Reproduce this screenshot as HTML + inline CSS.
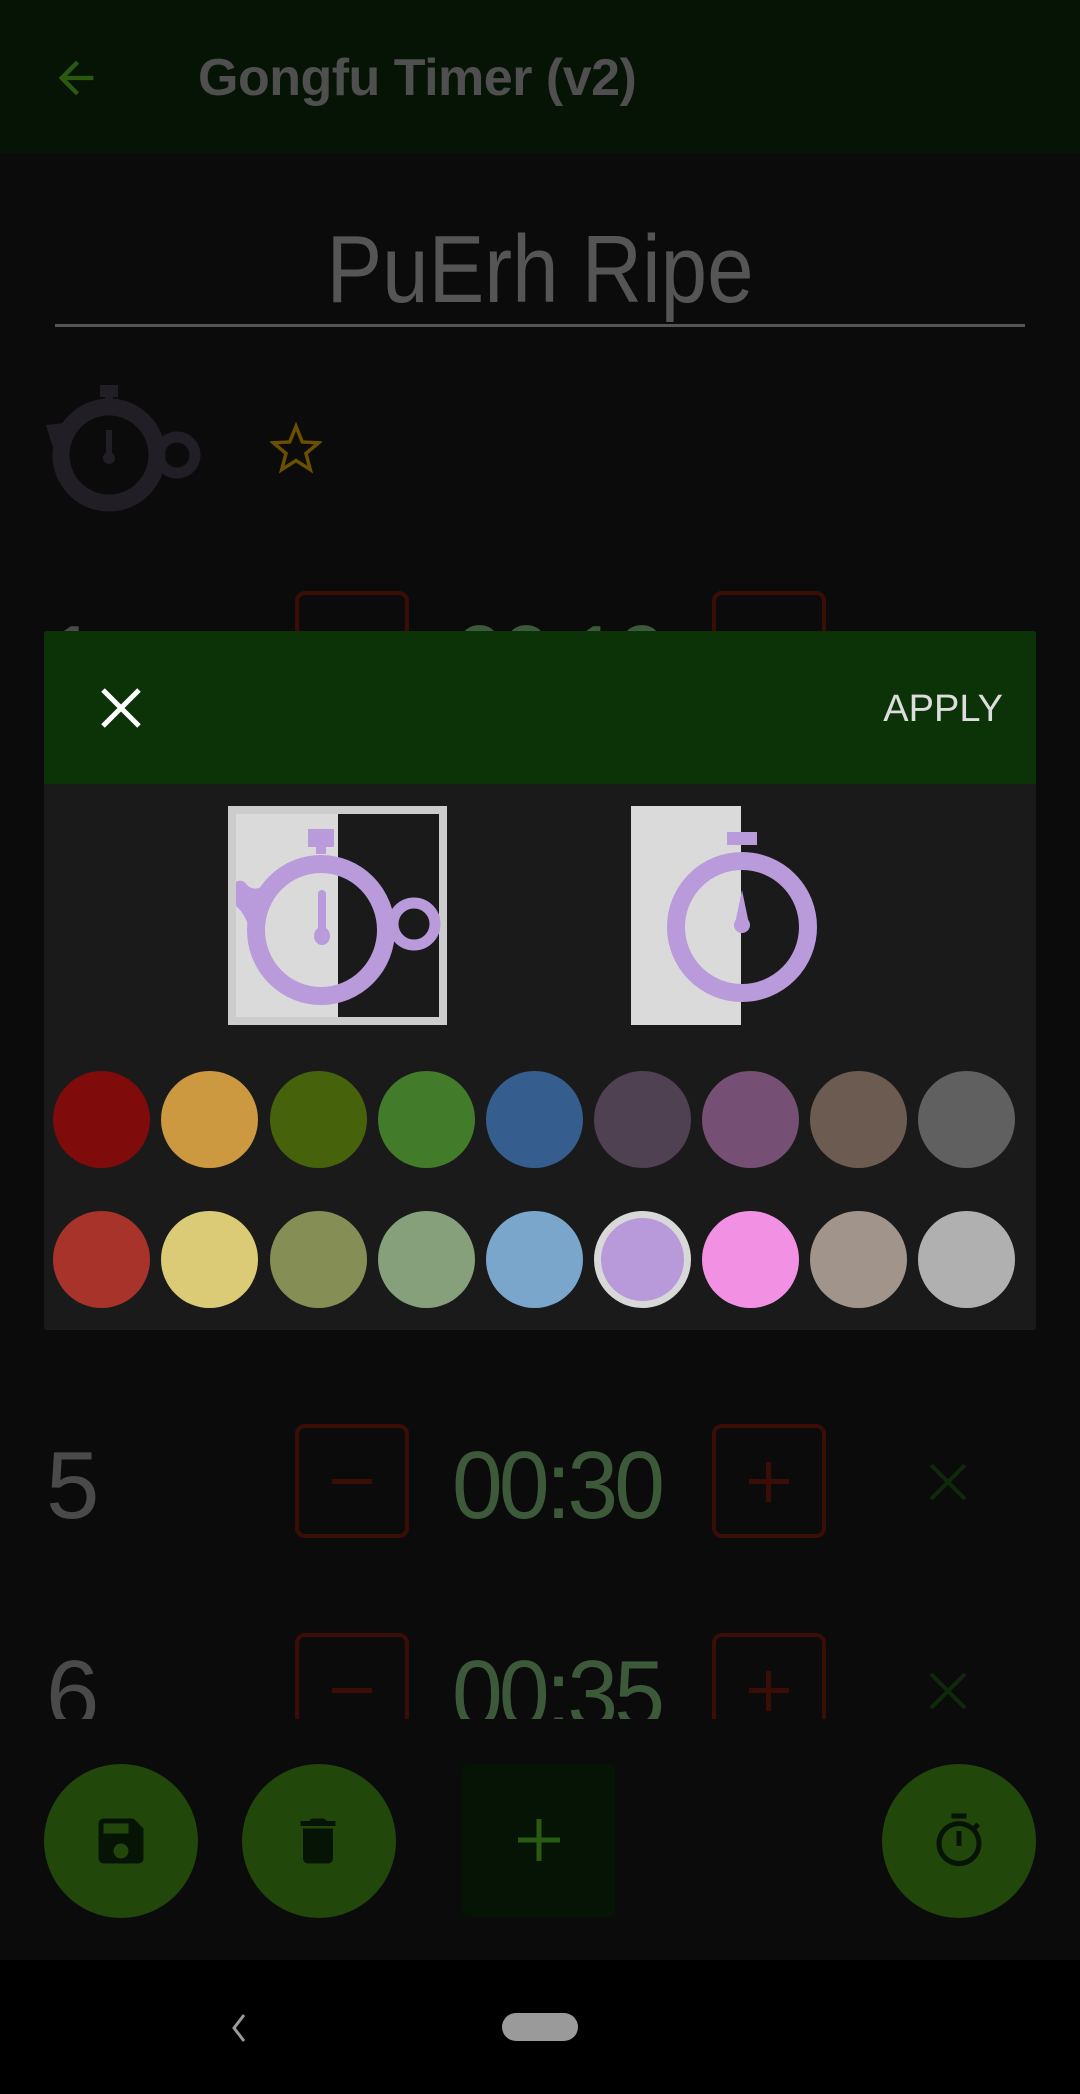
<!DOCTYPE html>
<html><head><meta charset="utf-8"><style>
*{margin:0;padding:0;box-sizing:border-box}
body{width:1080px;height:2094px;background:#0b0b0b;position:relative;overflow:hidden;font-family:"Liberation Sans",sans-serif}
.abs{position:absolute}
.circ{position:absolute;width:97px;height:97px;border-radius:50%}
.box{position:absolute;width:114px;height:114px;border:4px solid #3a0e06;border-radius:10px}
.num{position:absolute;color:#4a4a4a;font-size:96px;line-height:1}
.time{position:absolute;color:#3c5a3a;font-size:96px;line-height:1;letter-spacing:-4px;transform:scaleX(0.95);transform-origin:left}
.fab{position:absolute;width:154px;height:154px;border-radius:50%;background:#22470a;top:1764px}
</style></head><body>
<div class="abs" style="left:0;top:0;width:1080px;height:153px;background:#061405"></div>
<svg class="abs" style="left:50px;top:52px" width="52" height="52" viewBox="0 0 24 24"><path d="M20 11H7.8l5.6-5.6L12 4l-8 8 8 8 1.4-1.4L7.8 13H20z" fill="#2a5a10"/></svg>
<div class="abs" style="left:198px;top:52px;font-size:52px;font-weight:bold;color:#4f4f4f;line-height:1;letter-spacing:-0.5px">Gongfu Timer (v2)</div>

<div class="abs" style="left:0;width:1080px;top:222px;text-align:center;font-size:96px;color:#555;line-height:1;transform:scaleX(0.87)">PuErh Ripe</div>
<div class="abs" style="left:55px;top:324px;width:970px;height:3px;background:#555"></div>

<svg class="abs" style="left:44px;top:385px" width="160" height="128" viewBox="0 0 160 128">
<rect x="56" y="0" width="18" height="12" fill="#221e26"/><rect x="61" y="10" width="8" height="10" fill="#221e26"/>
<circle cx="65" cy="70" r="48" fill="none" stroke="#221e26" stroke-width="17"/>
<circle cx="133" cy="70" r="18" fill="none" stroke="#221e26" stroke-width="11"/>
<path d="M2 40 L20 38 L22 64 L8 60Z" fill="#221e26"/>
<rect x="62" y="45" width="6" height="28" fill="#221e26"/><circle cx="65" cy="73" r="6" fill="#221e26"/>
</svg>
<svg class="abs" style="left:270px;top:422px" width="52" height="52" viewBox="0 0 24 24"><path d="M12 2l2.9 7.2 7.6.4-5.9 4.9 2 7.5L12 17.8 5.4 22l2-7.5L1.5 9.6l7.6-.4z" fill="none" stroke="#6b4f00" stroke-width="1.6"/></svg>

<div class="box" style="left:295px;top:591px"></div>
<div class="box" style="left:712px;top:591px"></div>
<div class="time" style="left:454px;top:612px">00:10</div>
<div class="num" style="left:46px;top:612px">1</div>

<!-- dialog -->
<div class="abs" style="left:44px;top:631px;width:992px;height:699px;background:#1a1a1a;border-radius:3px"></div>
<div class="abs" style="left:44px;top:631px;width:992px;height:153px;background:#0b3307;border-radius:3px 3px 0 0"></div>
<svg class="abs" style="left:100px;top:687px" width="42" height="42" viewBox="0 0 42 42"><path d="M3 3L39 39M39 3L3 39" stroke="#fff" stroke-width="5"/></svg>
<div class="abs" style="left:860px;top:690px;width:143px;text-align:right;font-size:38px;color:#ddd;line-height:1">APPLY</div>

<svg class="abs" style="left:228px;top:806px" width="219" height="219" viewBox="0 0 219 219">
<rect x="0" y="0" width="219" height="219" fill="#cccccc"/>
<rect x="8" y="8" width="102" height="203" fill="#dadada"/>
<rect x="110" y="8" width="101" height="203" fill="#1a1a1a"/>
<rect x="80" y="23" width="26" height="18" fill="#b99ada"/><rect x="88" y="38" width="10" height="10" fill="#b99ada"/>
<ellipse cx="93" cy="124" rx="65" ry="66" fill="none" stroke="#b99ada" stroke-width="18"/>
<circle cx="186" cy="118" r="21" fill="none" stroke="#b99ada" stroke-width="11"/>
<path d="M8 76 Q14 72 20 80 Q28 86 38 78 L36 112 L24 130 Q18 108 8 100Z" fill="#b99ada"/>
<rect x="90" y="84" width="8" height="42" rx="4" fill="#b99ada"/><ellipse cx="94" cy="130" rx="8" ry="9" fill="#b99ada"/>
</svg>
<svg class="abs" style="left:631px;top:806px" width="219" height="219" viewBox="0 0 219 219">
<rect x="0" y="0" width="110" height="219" fill="#dadada"/>
<rect x="96" y="26" width="30" height="13" fill="#b99ada"/>
<ellipse cx="111" cy="121" rx="66" ry="66" fill="none" stroke="#b99ada" stroke-width="18"/>
<path d="M111 84 L118 118 L104 118Z" fill="#b99ada"/><circle cx="111" cy="119" r="8" fill="#b99ada"/>
</svg>

<div class="circ" style="left:53px;top:1071px;background:#7f0b0b"></div>
<div class="circ" style="left:161px;top:1071px;background:#cc9840"></div>
<div class="circ" style="left:270px;top:1071px;background:#46620b"></div>
<div class="circ" style="left:378px;top:1071px;background:#427b2a"></div>
<div class="circ" style="left:486px;top:1071px;background:#355e8f"></div>
<div class="circ" style="left:594px;top:1071px;background:#4f4052"></div>
<div class="circ" style="left:702px;top:1071px;background:#764f74"></div>
<div class="circ" style="left:810px;top:1071px;background:#6b5b50"></div>
<div class="circ" style="left:918px;top:1071px;background:#606060"></div>

<div class="circ" style="left:53px;top:1211px;background:#a8332a"></div>
<div class="circ" style="left:161px;top:1211px;background:#dbcb76"></div>
<div class="circ" style="left:270px;top:1211px;background:#858f55"></div>
<div class="circ" style="left:378px;top:1211px;background:#86a07c"></div>
<div class="circ" style="left:486px;top:1211px;background:#7ba6cc"></div>
<div class="circ" style="left:594px;top:1211px;background:#b89ada;border:7px solid #d8d8d8"></div>
<div class="circ" style="left:702px;top:1211px;background:#f291e4"></div>
<div class="circ" style="left:810px;top:1211px;background:#a0948b"></div>
<div class="circ" style="left:918px;top:1211px;background:#b0b0b0"></div>

<!-- row 5 -->
<div class="num" style="left:46px;top:1438px">5</div>
<div class="box" style="left:295px;top:1424px"></div>
<div class="abs" style="left:332px;top:1479px;width:40px;height:5px;background:#3a0e06"></div>
<div class="time" style="left:452px;top:1438px">00:30</div>
<div class="box" style="left:712px;top:1424px"></div>
<div class="abs" style="left:749px;top:1479px;width:40px;height:5px;background:#3a0e06"></div>
<div class="abs" style="left:766px;top:1462px;width:5px;height:40px;background:#3a0e06"></div>
<svg class="abs" style="left:928px;top:1462px" width="40" height="40"><path d="M3 3L37 37M37 3L3 37" stroke="#0f2a0b" stroke-width="4"/></svg>

<!-- row 6 clipped -->
<div class="abs" style="left:0;top:1633px;width:1080px;height:86px;overflow:hidden">
<div class="num" style="left:46px;top:14px">6</div>
<div class="box" style="left:295px;top:0"></div>
<div class="abs" style="left:332px;top:55px;width:40px;height:5px;background:#3a0e06"></div>
<div class="time" style="left:452px;top:14px">00:35</div>
<div class="box" style="left:712px;top:0"></div>
<div class="abs" style="left:749px;top:55px;width:40px;height:5px;background:#3a0e06"></div>
<div class="abs" style="left:766px;top:38px;width:5px;height:40px;background:#3a0e06"></div>
<svg class="abs" style="left:928px;top:38px" width="40" height="40"><path d="M3 3L37 37M37 3L3 37" stroke="#0f2a0b" stroke-width="4"/></svg>
</div>

<!-- fabs -->
<div class="fab" style="left:44px"></div>
<svg class="abs" style="left:91px;top:1811px" width="60" height="60" viewBox="0 0 24 24"><path d="M17 3H5a2 2 0 0 0-2 2v14a2 2 0 0 0 2 2h14a2 2 0 0 0 2-2V7zm-5 16a3 3 0 1 1 0-6 3 3 0 0 1 0 6zm3-10H5V5h10z" fill="#061405"/></svg>
<div class="fab" style="left:242px"></div>
<svg class="abs" style="left:288px;top:1811px" width="60" height="60" viewBox="0 0 24 24"><path d="M6 19a2 2 0 0 0 2 2h8a2 2 0 0 0 2-2V7H6zM19 4h-3.5l-1-1h-5l-1 1H5v2h14z" fill="#061405"/></svg>
<div class="abs" style="left:462px;top:1764px;width:153px;height:153px;background:#051405;border-radius:6px"></div>
<svg class="abs" style="left:518px;top:1819px" width="42" height="42"><path d="M21 0V42M0 21H42" stroke="#2a5a10" stroke-width="5"/></svg>
<div class="fab" style="left:882px"></div>
<svg class="abs" style="left:929px;top:1811px" width="60" height="60" viewBox="0 0 24 24"><path d="M15 1H9v2h6zm-4 13h2V8h-2zm8-6.6 1.4-1.4-1.4-1.4-1.4 1.4A9 9 0 1 0 21 13a9 9 0 0 0-2-5.6zM12 20a7 7 0 1 1 0-14 7 7 0 0 1 0 14z" fill="#061405"/></svg>

<!-- nav -->
<div class="abs" style="left:0;top:1960px;width:1080px;height:134px;background:#000"></div>
<svg class="abs" style="left:228px;top:2012px" width="22" height="32"><path d="M16 3L6 16L16 29" fill="none" stroke="#9a9a9a" stroke-width="3"/></svg>
<div class="abs" style="left:502px;top:2013px;width:76px;height:28px;border-radius:14px;background:#9a9a9a"></div>
</body></html>
